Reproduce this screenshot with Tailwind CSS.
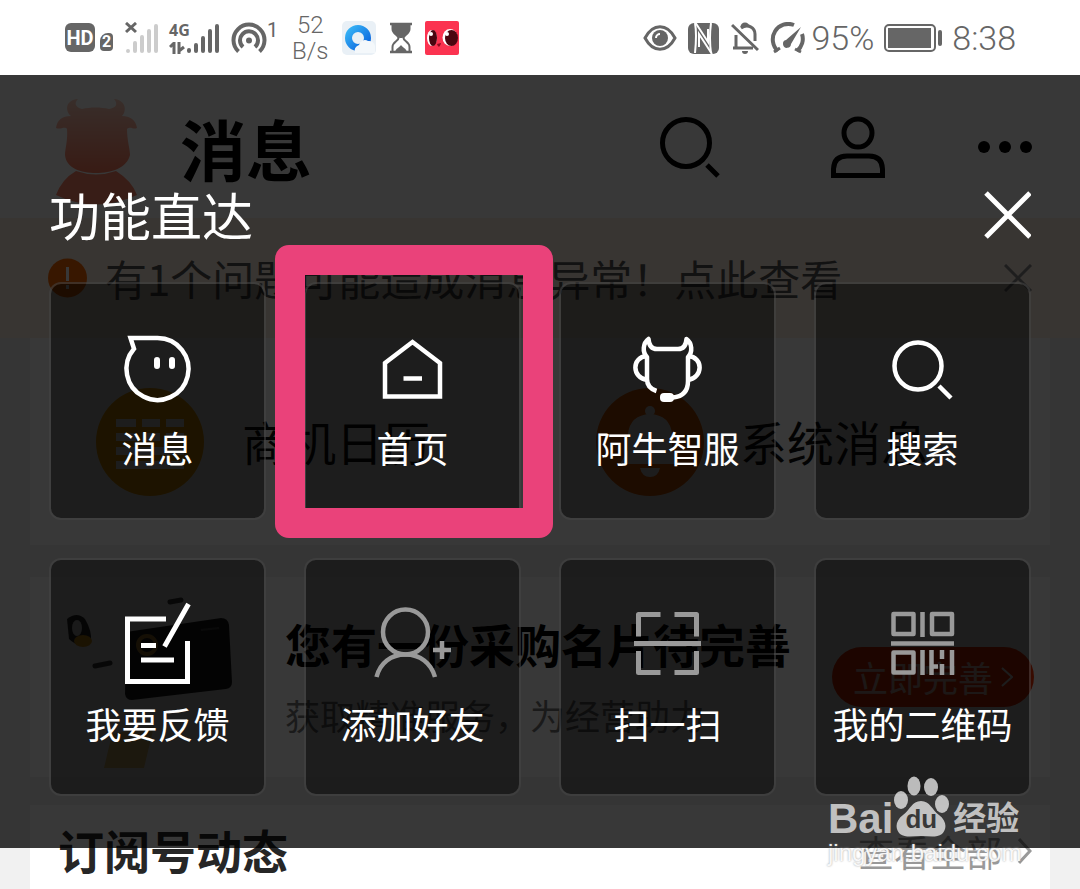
<!DOCTYPE html>
<html lang="zh-CN">
<head>
    <meta charset="UTF-8">
    <meta name="viewport" content="width=device-width, initial-scale=1.0">
    <title>功能直达</title>
    <script src="https://cdn.jsdelivr.net/npm/@tailwindcss/browser@4"></script>
</head>
<body class="flex min-h-screen flex-col bg-[#f1f1f1] font-['Noto_Sans_CJK_SC',sans-serif]">

    <!-- Status bar -->
    <header class="flex h-[75px] shrink-0 items-center justify-between bg-white pl-[65px] pr-16 font-['Roboto','Noto_Sans_CJK_SC',sans-serif] text-[#666]">
        <div class="flex items-center">
            <span class="flex h-[29px] w-[30px] items-center justify-center rounded-md bg-[#666] text-xl font-bold text-white">HD</span>
            <span class="ml-[5px] mt-2 flex h-[18px] w-[13px] items-center justify-center rounded-sm rounded-tl-lg bg-[#666] text-base font-bold text-white">2</span>
            <svg class="ml-3 h-8 w-[34px]" viewBox="0 0 34 32" aria-hidden="true">
                <g stroke="#ccc" stroke-width="4" stroke-linecap="round"><path d="M3 29v0M10 21v8M17 15v14M24 9v20M31 4v25"/></g>
                <path d="M1 1l10 9M11 1l-10 9" stroke="#666" stroke-width="3"/>
            </svg>
            <div class="relative ml-[10px] h-8 w-[52px]">
                <svg class="h-8 w-[52px]" viewBox="0 0 52 32" aria-hidden="true">
                    <g stroke="#666" stroke-width="4" stroke-linecap="round"><path d="M20 28v1M27 23v6M34 16v13M41 9v20M48 4v25"/></g>
                    <path d="M5 20v12M1 25l4-4M10 20v12M15 25l-5 4" fill="none" stroke="#666" stroke-width="3"/>
                </svg>
                <span class="absolute left-0 top-0 font-['Open_Sans',sans-serif] text-base leading-4 font-bold">4G</span>
            </div>
            <svg class="ml-[10px] h-8 w-[36px]" viewBox="0 0 36 32" fill="none" stroke="#666" stroke-width="4" aria-hidden="true">
                <path d="M7.500 29.500A15.500 15.500 0 1 1 28.500 29.500"/>
                <path d="M12 25A9 9 0 1 1 24 25"/>
                <circle cx="18" cy="18.500" r="3" fill="#666" stroke="none"/>
            </svg>
            <span class="mb-4 text-xl leading-5">1</span>
            <div class="ml-3 w-10 text-center text-2xl leading-[26px] font-light">52<br>B/s</div>
            <svg class="ml-3 h-[34px] w-[34px]" viewBox="0 0 34 34" aria-hidden="true">
                <defs><linearGradient id="qb" x1="0" y1="0" x2="1" y2="1"><stop offset="0" stop-color="#36b3f5"/><stop offset="1" stop-color="#0a62dd"/></linearGradient></defs>
                <rect width="34" height="34" rx="5" fill="#e9f0f6"/>
                <circle cx="16" cy="17" r="9.500" fill="#e9f0f6" stroke="url(#qb)" stroke-width="7"/>
                <path d="M13 32a6 6 0 0 1 4-8 6 6 0 0 1 9-4 6 6 0 0 1 7 5v7z" fill="#f4f8fb"/>
            </svg>
            <svg class="ml-[13px] h-8 w-6" viewBox="0 0 24 32" aria-hidden="true">
                <path d="M1 2h22M1 30h22" stroke="#666" stroke-width="2.500"/>
                <path d="M3.500 2v5c0 5 6 6 6 9s-6 4-6 9v5M20.500 2v5c0 5-6 6-6 9s6 4 6 9v5" fill="none" stroke="#666" stroke-width="2"/>
                <path d="M3.500 3h17v4c0 4-5 6-7 9h-3c-2-3-7-5-7-9zM6 30c1-4 4-4 6-7 2 3 5 3 6 7z" fill="#666"/>
            </svg>
            <svg class="ml-3 h-[34px] w-[34px]" viewBox="0 0 34 34" aria-hidden="true">
                <rect width="34" height="34" rx="2" fill="#fb3350"/>
                <ellipse cx="7" cy="17" rx="5" ry="8" fill="#fff"/><ellipse cx="8" cy="17" rx="4" ry="8" fill="#4a0610"/>
                <ellipse cx="25" cy="16.500" rx="7.500" ry="8.500" fill="#fff"/><ellipse cx="26.500" cy="17" rx="6.500" ry="8" fill="#4a0610"/>
                <circle cx="6" cy="13" r="2" fill="#fff"/><circle cx="22" cy="13" r="2" fill="#fff"/>
                <path d="M12 23q2 6 4-1z" fill="#8c0c20"/>
            </svg>
        </div>
        <div class="flex items-center">
            <svg class="h-8 w-[34px]" viewBox="0 0 34 32" fill="none" stroke="#666" stroke-width="3" aria-hidden="true">
                <path d="M2 16C10 1 24 1 32 16C24 31 10 31 2 16z"/>
                <circle cx="17" cy="16" r="8" fill="#666" stroke="none"/>
                <path d="M13 16a4 4 0 0 1 4-4" stroke="#fff" stroke-width="2"/>
            </svg>
            <svg class="ml-[10px] h-8 w-8" viewBox="0 0 32 32" aria-hidden="true">
                <rect x="1" y="1" width="31" height="31" rx="6" fill="#666"/>
                <path d="M8 0L21 20V7M25 32L12 12V25" fill="none" stroke="#fff" stroke-width="2"/>
                <path d="M8 1Q10 12 8 31M24 1Q22 16 24 31" fill="none" stroke="#fff" stroke-width="2"/>
            </svg>
            <svg class="ml-3 h-8 w-7" viewBox="0 0 28 32" fill="none" stroke="#666" stroke-width="3" aria-hidden="true">
                <path d="M2 26h20M5 25V13M10 6c7-5 14 0 14 6v7"/>
                <path d="M11 5a3 3 0 0 1 6 0M1 3l26 25"/>
                <path d="M11 29h6a3 3 0 0 1-6 0z" fill="#666" stroke="none"/>
            </svg>
            <svg class="ml-[10px] h-8 w-[38px]" viewBox="0 0 38 32" fill="none" stroke="#666" stroke-width="4" aria-hidden="true">
                <path d="M9 29A15.500 15.500 0 0 1 25 3M33 12A15.500 15.500 0 0 1 28 29"/>
                <path d="M5 30l6-4M32 30l-6-3" stroke-width="3"/>
                <path d="M32 5L22 22a4 4 0 1 1-5-4z" fill="#666" stroke="none"/>
            </svg>
            <span class="ml-1 text-[34px] leading-10 font-light">95%</span>
            <svg class="ml-[10px] h-7 w-[58px]" viewBox="0 0 58 28" aria-hidden="true">
                <rect x="1" y="1" width="50" height="26" rx="4" fill="none" stroke="#666" stroke-width="2"/>
                <rect x="4" y="4" width="43" height="20" fill="#666"/>
                <rect x="54" y="6" width="4" height="16" rx="2" fill="#666"/>
            </svg>
            <time class="ml-[10px] text-[34px] leading-10 font-light">8:38</time>
        </div>
    </header>

    <main class="relative flex flex-1 flex-col overflow-hidden">

        <!-- Message page -->
        <div class="flex h-[143px] shrink-0 items-center bg-white pl-[54px] pr-12">
            <svg class="mb-3 h-[108px] w-[84px] self-end" viewBox="0 0 84 108" aria-hidden="true">
                <defs><linearGradient id="cow" x1="0" y1="0" x2="0" y2="1"><stop offset="0" stop-color="#ffd0c0"/><stop offset="1" stop-color="#ff7a5c"/></linearGradient></defs>
                <path d="M24 1C11 2 11 13 17 18C8 18 3 22 2 30C6 32 11 28 13 31C14 42 11 51 11 57C12 70 27 75 42 75S73 70 76 57C76 51 73 42 73 31C77 28 79 32 83 30C82 22 76 18 68 18C73 13 72 2 60 1C65 7 61 10 55 11C47 9 36 9 28 11C21 9 20 5 24 1z" fill="url(#cow)"/>
                <path d="M22 73Q42 80 62 73Q78 83 83 97Q42 116 2 97Q8 81 22 73z" fill="#ff8468"/>
            </svg>
            <h1 class="ml-[42px] text-[66px] leading-[80px] font-bold text-black">消息</h1>
            <button type="button" aria-label="搜索消息" class="ml-auto">
                <svg class="h-16 w-16" viewBox="0 0 64 64" fill="none" stroke="#000" stroke-width="5"><circle cx="28" cy="28" r="23.500"/><path d="M49 50l11 11"/></svg>
            </button>
            <button type="button" aria-label="联系人" class="ml-[108px]">
                <svg class="h-16 w-[56px]" viewBox="0 0 56 64" fill="none" stroke="#000" stroke-width="5"><circle cx="28" cy="18" r="14"/><path d="M3.500 60.500V54Q4 41 17 41H39Q52 41 52.500 54V60.500z"/></svg>
            </button>
            <button type="button" aria-label="更多" class="ml-[90px]">
                <svg class="h-3 w-14" viewBox="0 0 56 12"><circle cx="8" cy="6" r="6"/><circle cx="29" cy="6" r="6"/><circle cx="50" cy="6" r="6"/></svg>
            </button>
        </div>

        <div class="flex h-[120px] shrink-0 items-center bg-[#ffefe4] pl-12 pr-12">
            <svg class="h-10 w-10" viewBox="0 0 40 40" aria-hidden="true"><circle cx="19.500" cy="20" r="19.500" fill="#ff6a00"/><path d="M19.500 9v14M19.500 27v4" stroke="#fff" stroke-width="3"/></svg>
            <p class="ml-[17px] text-[42px] leading-[52px] whitespace-nowrap text-[#555]">有1个问题可能造成消息异常！点此查看</p>
            <button type="button" aria-label="关闭提示" class="ml-auto">
                <svg class="h-7 w-7" viewBox="0 0 28 28" stroke="#888" stroke-width="3"><path d="M1 1l26 26M27 1L1 27"/></svg>
            </button>
        </div>

        <section class="mx-[30px] grid h-[207px] shrink-0 grid-cols-2 bg-white pr-5">
            <a href="#" class="flex items-center gap-[38px] pl-[66px] text-[47px] whitespace-nowrap text-[#111]">
                <svg class="h-[108px] w-[108px]" viewBox="0 0 108 108" aria-hidden="true"><circle cx="54" cy="54" r="54" fill="#ffa800"/><path d="M20 35h20M46 35h18M70 35h18M20 49h20M46 49h18M70 49h18M20 63h68M20 77h68" stroke="#fff" stroke-width="8"/></svg>
                商机日历
            </a>
            <a href="#" class="flex items-center gap-9 pl-[66px] text-[47px] whitespace-nowrap text-[#111]">
                <svg class="h-[108px] w-[108px]" viewBox="0 0 108 108" aria-hidden="true"><circle cx="54" cy="54" r="54" fill="#ff6a00"/><circle cx="54" cy="23" r="5" fill="#fff"/><path d="M24 76l8-14V46Q34 27 54 26Q74 27 76 46V62l8 14zM44 80h20Q62 89 54 89T44 80z" fill="#fff"/></svg>
                系统消息
            </a>
        </section>

        <section class="mx-[30px] mt-8 flex h-[200px] shrink-0 items-center bg-white pl-5 pr-4">
            <svg class="h-[190px] w-[190px] shrink-0" viewBox="0 0 190 190" aria-hidden="true">
                <path d="M0 28l120-22 22 130-118 24z" fill="#fafafa"/>
                <path d="M62 152l42-8-10 42H54z" fill="#f2cf7a"/>
                <path d="M76 50l95-14q7 0 8 7l3 57q0 6-6 7l-94 11q-6 0-7-6z" fill="#222"/>
                <path d="M151 48l18-2" stroke="#555" stroke-width="2"/>
                <circle cx="97" cy="63" r="9" fill="none" stroke="#b58a32" stroke-width="4"/>
                <path d="M17 37q10-8 18 0 7 12 6 22-12 8-22-2z" fill="#333"/><ellipse cx="27" cy="46" rx="5" ry="8" fill="#ddd"/><ellipse cx="33" cy="59" rx="9" ry="6" fill="#e8a21a"/>
                <path d="M45 84l15-3M120 20l11-2" stroke="#444" stroke-width="5" stroke-linecap="round"/>
            </svg>
            <div class="ml-[45px] flex flex-col gap-5 whitespace-nowrap">
                <h2 class="text-[46px] leading-[56px] font-bold text-black">您有一份采购名片待完善</h2>
                <p class="text-[35px] leading-[48px] text-[#777]">获取精准服务，为经营助力</p>
            </div>
            <button type="button" class="ml-auto flex h-[60px] w-[202px] shrink-0 items-center justify-center gap-2 rounded-full bg-[#ff3300] text-[35px] whitespace-nowrap text-white/80">
                立即完善
                <svg class="h-5 w-3" viewBox="0 0 12 20" fill="none" stroke="#fff" stroke-width="2"><path d="M1 1l10 9-10 9"/></svg>
            </button>
        </section>

        <section class="mx-[30px] mt-7 flex flex-1 items-start justify-between bg-white pt-4 pr-[18px] pl-7">
            <h2 class="text-[46px] leading-[56px] font-bold text-[#262626]">订阅号动态</h2>
            <a href="#" class="flex items-center gap-4 text-[36px] leading-[60px] text-[#999]">
                查看全部
                <svg class="h-7 w-[14px]" viewBox="0 0 14 28" fill="none" stroke="#999" stroke-width="3"><path d="M1 2l11 12L1 26"/></svg>
            </a>
        </section>

        <!-- Quick access panel -->
        <div role="dialog" aria-labelledby="panel-title" class="absolute inset-x-0 top-0 bg-black/78 px-[49px] pt-[108px] pb-[52px] text-white">
            <div class="mb-9 flex items-start justify-between">
                <h2 id="panel-title" class="text-[51px] leading-[63px]">功能直达</h2>
                <button type="button" aria-label="关闭" class="pt-2">
                    <svg class="h-12 w-12" viewBox="0 0 48 48" stroke="#fff" stroke-width="5"><path d="M3 2l44 44M47 2L3 46"/></svg>
                </button>
            </div>
            <div class="grid grid-cols-4 gap-[38px] text-[36px] leading-[46px] whitespace-nowrap">
                <button type="button" class="flex flex-col items-center gap-[14px] rounded-xl border-2 border-white/15 bg-black/47 pt-[42px] pb-12">
                    <svg class="h-[84px] w-[84px]" viewBox="0 0 84 84" fill="none" stroke="#fff" stroke-width="4.500"><path d="M41.500 12A31 31 0 1 1 18 22.800L14.500 12z"/><path d="M41 34v6M56 34v6" stroke-width="6" stroke-linecap="round"/></svg>
                    消息
                </button>
                <button type="button" class="relative flex flex-col items-center gap-[14px] rounded-xl border-2 border-white/15 bg-black/47 pt-[42px] pb-12">
                    <svg class="h-[84px] w-[84px]" viewBox="0 0 84 84" fill="none" stroke="#fff" stroke-width="4.500"><path d="M14 37L41.500 16L69 37V70.500H14zM32.500 52.500h18.500"/></svg>
                    首页
                    <!-- Highlight frame -->
                    <span class="pointer-events-none absolute -top-[39px] -right-[34px] -bottom-5 -left-[31px] rounded-[14px] border-[30px] border-[#ea427a]"></span>
                </button>
                <button type="button" class="flex flex-col items-center gap-[14px] rounded-xl border-2 border-white/15 bg-black/47 pt-[42px] pb-12">
                    <svg class="h-[84px] w-[84px]" viewBox="0 0 84 84" fill="none" stroke="#fff" stroke-width="4.500" stroke-linejoin="round"><path d="M30.500 65Q21 62 21 53V31C16 26 17 17 22.500 13C23 20 26 23 31 23H52C57 23 60 20 60.500 13C66 17 67 26 62 31V55Q62 70 47 71.500"/><path d="M21 30C5 31 6 52 21 54M62 30C78 31 77 52 62 54"/><rect x="34" y="67" width="14" height="9" rx="4" fill="#fff" stroke="none"/></svg>
                    阿牛智服
                </button>
                <button type="button" class="flex flex-col items-center gap-[14px] rounded-xl border-2 border-white/15 bg-black/47 pt-[42px] pb-12">
                    <svg class="h-[84px] w-[84px]" viewBox="0 0 84 84" fill="none" stroke="#fff" stroke-width="4.500"><circle cx="37" cy="40" r="23.500"/><path d="M58 60l12 12"/></svg>
                    搜索
                </button>
                <button type="button" class="flex flex-col items-center gap-[14px] rounded-xl border-2 border-white/15 bg-black/47 pt-[42px] pb-12">
                    <svg class="h-[84px] w-[84px]" viewBox="0 0 84 84" fill="none" stroke="#fff" stroke-width="5"><path d="M50 17H11.500V79.500H71.500V39M72.500 2L48.500 44.500M25 43.500h15M25 58h33"/></svg>
                    我要反馈
                </button>
                <button type="button" class="flex flex-col items-center gap-[14px] rounded-xl border-2 border-white/15 bg-black/47 pt-[42px] pb-12">
                    <svg class="h-[84px] w-[84px]" viewBox="0 0 84 84" fill="none" stroke="#999" stroke-width="4.500"><circle cx="34.500" cy="30" r="22.500"/><path d="M5.500 75C9 61 20 52.500 34.500 52.500S60 61 64 75M62 48h18M71 39v18"/></svg>
                    添加好友
                </button>
                <button type="button" class="flex flex-col items-center gap-[14px] rounded-xl border-2 border-white/15 bg-black/47 pt-[42px] pb-12">
                    <svg class="h-[84px] w-[84px]" viewBox="0 0 84 84" fill="none" stroke="#999" stroke-width="5" stroke-linejoin="round"><path d="M34.500 12.500H12.500V34.500M48.500 12.500H70.500V34.500M12.500 49V70.500H34.500M48.500 70.500H70.500V49M8 41.500H75"/></svg>
                    扫一扫
                </button>
                <button type="button" class="flex flex-col items-center gap-[14px] rounded-xl border-2 border-white/15 bg-black/47 pt-[42px] pb-12">
                    <svg class="h-[84px] w-[84px]" viewBox="0 0 84 84" fill="none" stroke="#999" stroke-width="4.500" stroke-linejoin="round"><path d="M12.500 12H32.500V32H12.500zM51 12H71V32H51zM12.500 50.500H32.500V70.500H12.500zM41.500 10V35M10 41.500H73M41.500 48V73M50.500 48V73M61 48V57M61 62V73M71 48V73M50.500 64.500H57"/></svg>
                    我的二维码
                </button>
            </div>
        </div>

        <!-- Watermark -->
        <div class="pointer-events-none absolute right-[58px] bottom-5 flex w-[194px] flex-col text-white/70">
            <div class="flex items-end">
                <span class="font-['Liberation_Sans',sans-serif] text-[42px] leading-9 font-bold">Bai</span>
                <div class="relative h-[62px] w-14">
                    <svg class="h-[62px] w-14" viewBox="0 0 56 62" fill="currentColor" aria-hidden="true">
                        <ellipse cx="8" cy="25" rx="7" ry="9"/><ellipse cx="21" cy="11" rx="6.500" ry="9.500"/><ellipse cx="38" cy="12" rx="7" ry="9"/><ellipse cx="49" cy="29" rx="7" ry="9"/>
                        <path d="M28 26C37 26 39 35 46 40C54 46 54 54 49 59C43 63 36 61 28 61S13 63 7 59C2 54 2 46 10 40C17 35 19 26 28 26z"/>
                    </svg>
                    <span class="absolute inset-x-0 bottom-1 text-center font-['Liberation_Sans',sans-serif] text-[26px] leading-7 font-bold text-[#383838]">du</span>
                </div>
                <span class="ml-1 text-[33px] leading-[42px] font-bold">经验</span>
            </div>
            <span class="font-['Liberation_Sans',sans-serif] text-2xl leading-8 text-white/90 text-shadow-[0_0_2px_#999]">jingyan.baidu.com</span>
        </div>
    </main>
</body>
</html>
